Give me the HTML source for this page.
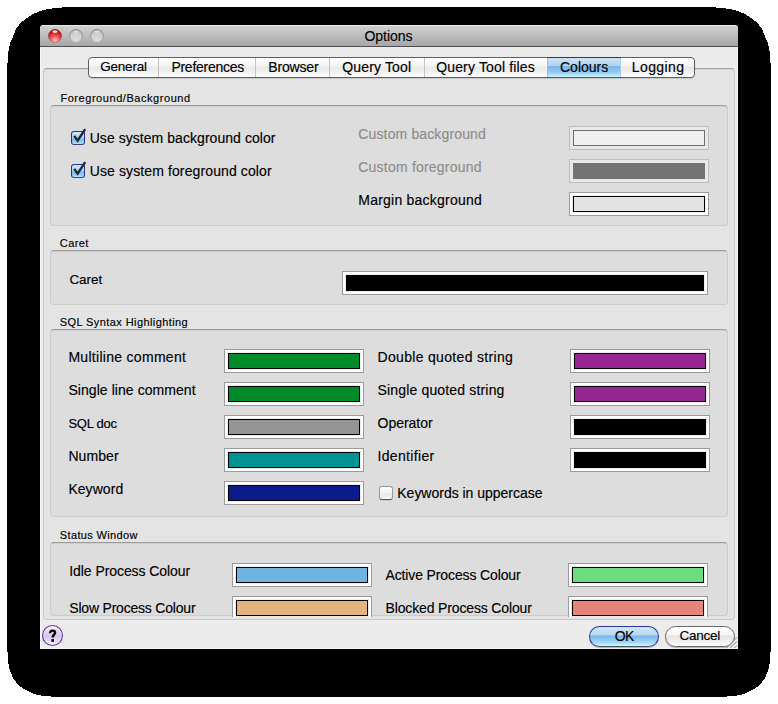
<!DOCTYPE html>
<html><head><meta charset="utf-8"><style>
*{margin:0;padding:0;box-sizing:border-box}
html,body{width:778px;height:704px;background:#fff;overflow:hidden;position:relative;font-family:"Liberation Sans",sans-serif}
.t{position:absolute;white-space:nowrap;line-height:1;color:#000;-webkit-text-stroke:0.15px currentColor}
#shadow{position:absolute;left:0;top:0}
#win{position:absolute;left:40px;top:25px;width:698px;height:624px;background:#ececec;border-radius:4px 4px 0 0;overflow:hidden;box-shadow:inset 1px 0 0 #f6f6f6,inset -1px 0 0 #f6f6f6,inset 0 -1px 0 #f6f6f6}
#title{position:absolute;left:0;top:0;width:698px;height:22px;background:linear-gradient(#e8e8e8 0,#e8e8e8 1px,#d0d0d0 1px,#bcbcbc 11px,#a6a6a6 21px);border-bottom:1px solid #515151}
#pane{position:absolute;left:43px;top:68px;width:692px;height:552px;background:#e4e4e4;border:1px solid #cacaca;border-top-color:#a0a0a0;border-radius:4px;box-shadow:inset 0 1px 0 #d6d6d6}
.grp{position:absolute;left:50px;width:678px;background:#dddddd;border:1px solid #cbcbcb;border-top-color:#9c9c9c;border-radius:4px;box-shadow:inset 0 1px 0 #cfcfcf}
#tabs{position:absolute;left:88px;top:57px;width:607px;height:21px;border:1px solid #5e5e5e;border-radius:4px;background:linear-gradient(#ffffff 0,#f4f4f4 8px,#e8e8e8 9px,#f0f0f0 14px,#ffffff 19px);box-shadow:0 1px 1px rgba(0,0,0,.12);overflow:hidden}
#seltab{position:absolute;left:547px;top:57px;width:74px;height:21px;border-top:1px solid #2c2f92;border-bottom:1px solid #4f5470;box-shadow:inset 1px 0 0 #9cc0e4,inset -1px 0 0 #a8cdec;background:linear-gradient(#d0e4f6 0,#b0d1f0 8px,#7ab5e8 8px,#92c8f2 14px,#c8f8ff 19px) 0 0/100% 19px no-repeat}
.tdiv{position:absolute;top:0;width:1px;height:19px;background:#c4c4c4}
.well{position:absolute;background:#fff;border:1px solid #9b9b9b;padding:3px}
.well .wi{width:100%;height:100%;border:1px solid #000;box-shadow:0 0 0 1px #ececec}
.well.dis{background:#e8e8e8;border-color:#bdbdbd}
.well.dis .wi{box-shadow:none}
.cb{position:absolute;width:14px;height:14px;border-radius:3px}
.btn{position:absolute;top:626px;width:70px;height:21px;border-radius:10.5px;box-shadow:0 1px 1px rgba(0,0,0,.25)}
</style></head><body>
<svg id="shadow" width="778" height="704" shape-rendering="crispEdges"><path d="M62 7H716V8H726V9H732V10H736V11H739V12H741V13H744V14H746V15H747V16H749V17H750V18H752V19H753V20H754V21H756V22H757V23H758V24H759V26H760V27H761V28H762V30H763V33H764V35H765V38H766V40H767V42H768V46H769V51H770V63H771V652H770V664H769V669H768V672H767V674H766V677H765V679H764V680H763V681H762V683H761V684H760V685H759V686H758V687H756V688H755V689H753V690H751V691H749V692H747V693H745V694H742V695H737V696H727V697H51V696H41V695H36V694H33V693H31V692H29V691H27V690H25V689H23V688H22V687H20V686H19V685H18V684H17V683H16V681H15V680H14V679H13V677H12V674H11V672H10V669H9V664H8V652H7V63H8V51H9V46H10V42H11V40H12V38H13V35H14V33H15V30H16V28H17V27H18V26H19V24H20V23H21V22H22V21H24V20H25V19H26V18H28V17H29V16H31V15H32V14H34V13H37V12H39V11H42V10H46V9H52V8H62V7Z" fill="#000"/></svg>
<svg width="0" height="0" style="position:absolute"><defs>
<radialGradient id="gf" cx="0.5" cy="0.8" r="0.75"><stop offset="0" stop-color="#dedede"/><stop offset="0.7" stop-color="#cdcdcd"/><stop offset="1" stop-color="#bdbdbd"/></radialGradient>
<linearGradient id="gs" x1="0" y1="0" x2="0" y2="1"><stop offset="0" stop-color="#7c7c7c"/><stop offset="1" stop-color="#b4b4b4"/></linearGradient>
</defs></svg>
<div id="win">
  <div id="title"></div>
</div>
<svg style="position:absolute;left:47px;top:28px" width="16" height="16">
<defs><radialGradient id="rf" cx="0.5" cy="0.85" r="0.75"><stop offset="0" stop-color="#ffd0d0"/><stop offset="0.45" stop-color="#f25a5a"/><stop offset="0.8" stop-color="#e02424"/><stop offset="1" stop-color="#c01010"/></radialGradient>
<linearGradient id="rs" x1="0" y1="0" x2="0" y2="1"><stop offset="0" stop-color="#7a0a0a"/><stop offset="1" stop-color="#c87878"/></linearGradient></defs>
<circle cx="8" cy="8" r="6.4" fill="url(#rf)" stroke="url(#rs)" stroke-width="1"/>
<ellipse cx="8" cy="3.6" rx="2.6" ry="1.3" fill="#fff" opacity="0.85"/></svg>
<svg style="position:absolute;left:68px;top:28px" width="16" height="16">
<circle cx="8" cy="8" r="6.4" fill="url(#gf)" stroke="url(#gs)" stroke-width="1"/>
<ellipse cx="8" cy="3.6" rx="2.4" ry="1.2" fill="#fff" opacity="0.45"/></svg>
<svg style="position:absolute;left:89px;top:28px" width="16" height="16">
<circle cx="8" cy="8" r="6.4" fill="url(#gf)" stroke="url(#gs)" stroke-width="1"/>
<ellipse cx="8" cy="3.6" rx="2.4" ry="1.2" fill="#fff" opacity="0.45"/></svg>
<div id="pane"></div>
<div class="grp" style="top:105px;height:121px"></div>
<div class="grp" style="top:250px;height:55px"></div>
<div class="grp" style="top:329px;height:188px"></div>
<div class="grp" style="top:542px;height:74px"></div>
<div id="tabs"><div class="tdiv" style="left:69.0px"></div>
<div class="tdiv" style="left:166.0px"></div>
<div class="tdiv" style="left:240.1px"></div>
<div class="tdiv" style="left:334.5px"></div></div><div id="seltab"></div>
<div class="well dis" style="left:569px;top:126px;width:140px;height:24px"><div class="wi" style="background:#f0f0f0;border-color:#6e6e6e"></div></div>
<div class="well dis" style="left:569px;top:159px;width:140px;height:24px"><div class="wi" style="background:#737373;border-color:#737373"></div></div>
<div class="well" style="left:569px;top:192px;width:140px;height:24px"><div class="wi" style="background:#e3e3e3;border-color:#000"></div></div>
<div class="well" style="left:342px;top:271px;width:366px;height:24px"><div class="wi" style="background:#000;border-color:#000"></div></div>
<div class="well" style="left:224px;top:349px;width:140px;height:24px"><div class="wi" style="background:#008a2a;border-color:#000"></div></div>
<div class="well" style="left:224px;top:382px;width:140px;height:24px"><div class="wi" style="background:#008a2a;border-color:#000"></div></div>
<div class="well" style="left:224px;top:415px;width:140px;height:24px"><div class="wi" style="background:#959595;border-color:#000"></div></div>
<div class="well" style="left:224px;top:448px;width:140px;height:24px"><div class="wi" style="background:#009393;border-color:#000"></div></div>
<div class="well" style="left:224px;top:481px;width:140px;height:24px"><div class="wi" style="background:#0b1b8c;border-color:#000"></div></div>
<div class="well" style="left:570px;top:349px;width:140px;height:24px"><div class="wi" style="background:#952590;border-color:#000"></div></div>
<div class="well" style="left:570px;top:382px;width:140px;height:24px"><div class="wi" style="background:#952590;border-color:#000"></div></div>
<div class="well" style="left:570px;top:415px;width:140px;height:24px"><div class="wi" style="background:#000;border-color:#000"></div></div>
<div class="well" style="left:570px;top:448px;width:140px;height:24px"><div class="wi" style="background:#000;border-color:#000"></div></div>
<div style="position:absolute;left:0;top:0;width:778px;height:617px;overflow:hidden">
<div class="well" style="left:232px;top:563px;width:140px;height:24px"><div class="wi" style="background:#6eb4e0;border-color:#000"></div></div>
<div class="well" style="left:232px;top:596px;width:140px;height:24px"><div class="wi" style="background:#e3b47e;border-color:#000"></div></div>
<div class="well" style="left:568px;top:563px;width:140px;height:24px"><div class="wi" style="background:#6ddc80;border-color:#000"></div></div>
<div class="well" style="left:568px;top:596px;width:140px;height:24px"><div class="wi" style="background:#e5847a;border-color:#000"></div></div>
</div>
<div class="cb" style="left:71px;top:131px;border:1px solid #2433a0;border-bottom-color:#3c4470;background:linear-gradient(#d2e8fa 0,#a6d0f2 6px,#7ab8ec 7px,#9fd6f6 11px,#c8fbff 13px)"></div>
<div class="cb" style="left:71px;top:164px;border:1px solid #2433a0;border-bottom-color:#3c4470;background:linear-gradient(#d2e8fa 0,#a6d0f2 6px,#7ab8ec 7px,#9fd6f6 11px,#c8fbff 13px)"></div>
<svg style="position:absolute;left:70px;top:127px" width="20" height="20"><path d="M4.2 8.8 L7.6 13.6 L15.2 2.2" stroke="#1b2633" stroke-width="2.3" fill="none" stroke-linecap="butt" stroke-linejoin="miter"/></svg>
<svg style="position:absolute;left:70px;top:160px" width="20" height="20"><path d="M4.2 8.8 L7.6 13.6 L15.2 2.2" stroke="#1b2633" stroke-width="2.3" fill="none" stroke-linecap="butt" stroke-linejoin="miter"/></svg>
<div class="cb" style="left:379px;top:486px;border:1px solid #9a9a9a;border-bottom-color:#555;box-shadow:0 0.5px 0.5px rgba(0,0,0,.2);background:linear-gradient(#ffffff 0,#f2f2f2 6px,#e6e6e6 7px,#f4f4f4 11px,#ffffff 13px)"></div>
<svg style="position:absolute;left:41px;top:624px" width="23" height="23">
<defs><linearGradient id="hf" x1="0" y1="0" x2="0" y2="1"><stop offset="0" stop-color="#ffffff"/><stop offset="0.25" stop-color="#e6dcf6"/><stop offset="0.55" stop-color="#d4c6ee"/><stop offset="1" stop-color="#fbf2ff"/></linearGradient></defs>
<circle cx="11.5" cy="11.5" r="10" fill="url(#hf)" stroke="#6b3d9e" stroke-width="1.1"/>
<path d="M9.1 9.2 C9.1 7.4 10.2 6.6 11.6 6.6 C13.1 6.6 14.1 7.5 14.1 8.8 C14.1 10.6 11.7 10.9 11.7 13.4" stroke="#000" stroke-width="2.4" fill="none"/>
<rect x="10.4" y="15.1" width="2.6" height="2.7" fill="#000"/>
</svg>
<div class="btn" style="left:589px;border:1px solid #2d3590;border-bottom-color:#4a4f6a;background:linear-gradient(#d0e6f8 0,#b6d8f3 8px,#7ab6e9 9px,#a6dcfa 16px,#d4fbff 19px)"></div>
<div class="btn" style="left:665px;border:1px solid #6a6a6a;background:linear-gradient(#ffffff 0,#f6f6f6 8px,#e4e4e4 9px,#f2f2f2 15px,#ffffff 19px)"></div>
<svg style="position:absolute;left:724px;top:634px" width="14" height="15"><path d="M13 3.5 L2.5 14 M13 7.5 L6.5 14 M13 11.5 L10.5 14" stroke="#707070" stroke-width="1" fill="none"/><path d="M13 4.6 L3.6 14 M13 8.6 L7.6 14 M13 12.6 L11.6 14" stroke="#ffffff" stroke-width="0.8" fill="none"/></svg>
<div class="t" style="left:364.40px;top:29.45px;font-size:14px;letter-spacing:-0.008px;color:#000">Options</div>
<div class="t" style="left:100.20px;top:60.37px;font-size:13.5px;letter-spacing:-0.205px;color:#000">General</div>
<div class="t" style="left:171.40px;top:59.95px;font-size:14px;letter-spacing:-0.258px;color:#000">Preferences</div>
<div class="t" style="left:268.30px;top:59.95px;font-size:14px;letter-spacing:-0.180px;color:#000">Browser</div>
<div class="t" style="left:342.30px;top:59.95px;font-size:14px;letter-spacing:0.146px;color:#000">Query Tool</div>
<div class="t" style="left:436.20px;top:59.95px;font-size:14px;letter-spacing:0.155px;color:#000">Query Tool files</div>
<div class="t" style="left:560.00px;top:59.95px;font-size:14px;letter-spacing:-0.007px;color:#000">Colours</div>
<div class="t" style="left:631.80px;top:59.95px;font-size:14px;letter-spacing:0.393px;color:#000">Logging</div>
<div class="t" style="left:60.40px;top:92.59px;font-size:11px;letter-spacing:0.554px;color:#000">Foreground/Background</div>
<div class="t" style="left:59.80px;top:237.69px;font-size:11px;letter-spacing:0.389px;color:#000">Caret</div>
<div class="t" style="left:59.80px;top:317.19px;font-size:11px;letter-spacing:0.413px;color:#000">SQL Syntax Highlighting</div>
<div class="t" style="left:59.80px;top:529.59px;font-size:11px;letter-spacing:0.357px;color:#000">Status Window</div>
<div class="t" style="left:89.70px;top:130.75px;font-size:14px;letter-spacing:0.052px;color:#000">Use system background color</div>
<div class="t" style="left:89.70px;top:163.75px;font-size:14px;letter-spacing:0.115px;color:#000">Use system foreground color</div>
<div class="t" style="left:358.30px;top:127.45px;font-size:14px;letter-spacing:0.137px;color:#8c8c8c">Custom background</div>
<div class="t" style="left:358.30px;top:160.35px;font-size:14px;letter-spacing:0.209px;color:#8c8c8c">Custom foreground</div>
<div class="t" style="left:358.30px;top:193.35px;font-size:14px;letter-spacing:0.227px;color:#000">Margin background</div>
<div class="t" style="left:69.40px;top:272.57px;font-size:13.5px;letter-spacing:-0.065px;color:#000">Caret</div>
<div class="t" style="left:68.40px;top:350.15px;font-size:14px;letter-spacing:0.292px;color:#000">Multiline comment</div>
<div class="t" style="left:68.40px;top:383.15px;font-size:14px;letter-spacing:0.063px;color:#000">Single line comment</div>
<div class="t" style="left:68.40px;top:417.00px;font-size:13px;letter-spacing:-0.247px;color:#000">SQL doc</div>
<div class="t" style="left:68.40px;top:449.15px;font-size:14px;letter-spacing:0.094px;color:#000">Number</div>
<div class="t" style="left:68.40px;top:482.15px;font-size:14px;letter-spacing:0.053px;color:#000">Keyword</div>
<div class="t" style="left:377.50px;top:350.15px;font-size:14px;letter-spacing:0.320px;color:#000">Double quoted string</div>
<div class="t" style="left:377.50px;top:383.15px;font-size:14px;letter-spacing:0.165px;color:#000">Single quoted string</div>
<div class="t" style="left:377.50px;top:416.15px;font-size:14px;letter-spacing:-0.012px;color:#000">Operator</div>
<div class="t" style="left:377.50px;top:449.15px;font-size:14px;letter-spacing:0.341px;color:#000">Identifier</div>
<div class="t" style="left:397.30px;top:485.85px;font-size:14px;letter-spacing:-0.017px;color:#000">Keywords in uppercase</div>
<div class="t" style="left:69.25px;top:564.15px;font-size:14px;letter-spacing:-0.067px;color:#000">Idle Process Colour</div>
<div class="t" style="left:69.25px;top:600.85px;font-size:14px;letter-spacing:-0.199px;color:#000">Slow Process Colour</div>
<div class="t" style="left:385.50px;top:567.95px;font-size:14px;letter-spacing:-0.128px;color:#000">Active Process Colour</div>
<div class="t" style="left:385.50px;top:600.85px;font-size:14px;letter-spacing:-0.145px;color:#000">Blocked Process Colour</div>
<div class="t" style="left:614.80px;top:628.75px;font-size:14px;letter-spacing:-0.600px;color:#000">OK</div>
<div class="t" style="left:679.50px;top:629.17px;font-size:13.5px;letter-spacing:-0.265px;color:#000">Cancel</div>
</body></html>
